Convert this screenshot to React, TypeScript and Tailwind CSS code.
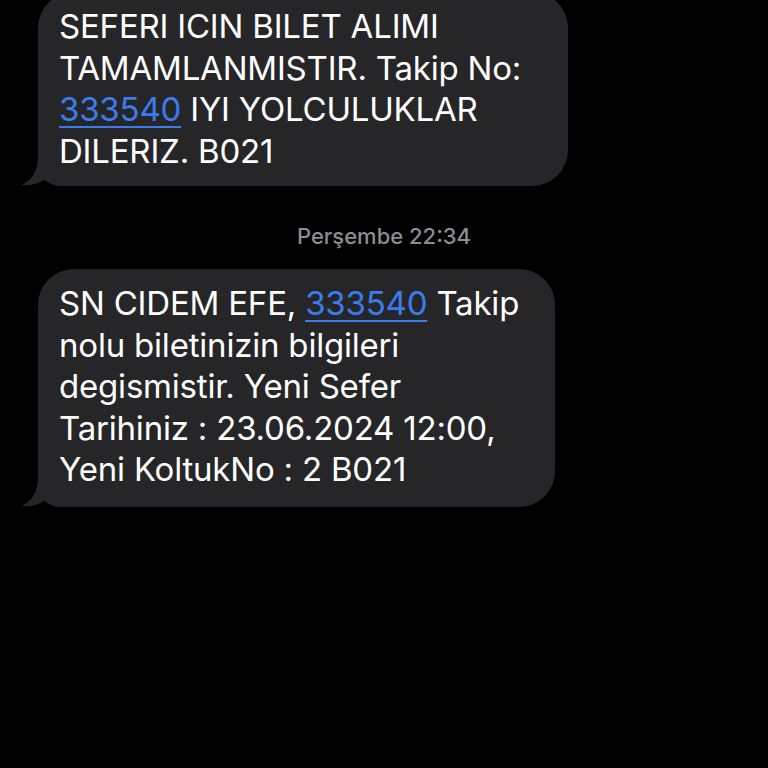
import React from "react";

const bubble = "#262628";

function Tail() {
  return (
    <svg
      className="absolute -left-[17px] bottom-0"
      width="34"
      height="30"
      viewBox="0 0 34 30"
      fill={bubble}
    >
      <path d="M17 0 C17 14 12 23 1 29 C10 30 20 27 26 22 L34 22 L34 0 Z" />
    </svg>
  );
}

function Link({ children }: { children: React.ReactNode }) {
  return (
    <span className="text-[#3a7cf0] underline decoration-[2px] underline-offset-[5px]">
      {children}
    </span>
  );
}

export default function App() {
  return (
    <div
      className="w-[768px] h-[768px] bg-black overflow-hidden"
      style={{ fontFamily: "Inter, 'Noto Sans', sans-serif" }}
    >
      <div className="pl-[38px]">
        <div className="relative w-[530px] -mt-[8px] rounded-[36px] rounded-bl-[22px] bg-[#262628] pl-[21px] pr-4 pt-[14px] pb-[14px] text-[33px] leading-[41.5px] tracking-[-0.2px] text-white">
          SEFERI ICIN BILET ALIMI
          <br />
          TAMAMLANMISTIR. Takip No:
          <br />
          <Link>333540</Link> IYI YOLCULUKLAR
          <br />
          DILERIZ. B021
          <Tail />
        </div>
      </div>

      <div className="flex justify-center pt-[38px] pb-[21px]">
        <span className="text-[22px] leading-[24px] font-medium text-[#8d8d92]">
          Perşembe 22:34
        </span>
      </div>

      <div className="pl-[38px]">
        <div className="relative w-[517px] rounded-[36px] rounded-bl-[22px] bg-[#262628] pl-[21px] pr-4 pt-[14px] pb-[16px] text-[33px] leading-[41.5px] tracking-[-0.2px] text-white">
          SN CIDEM EFE, <Link>333540</Link> Takip
          <br />
          nolu biletinizin bilgileri
          <br />
          degismistir. Yeni Sefer
          <br />
          Tarihiniz : 23.06.2024 12:00,
          <br />
          Yeni KoltukNo : 2 B021
          <Tail />
        </div>
      </div>
    </div>
  );
}
